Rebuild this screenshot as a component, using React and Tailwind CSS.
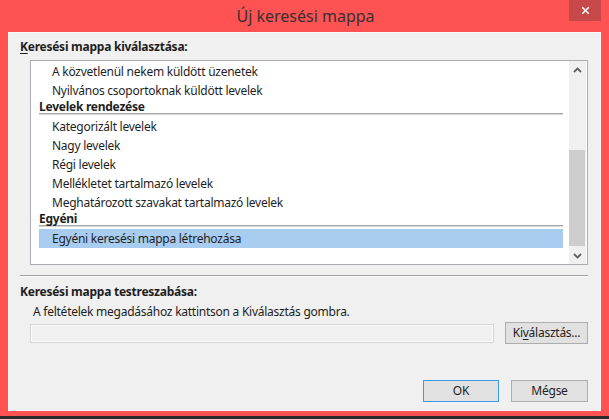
import { X } from 'lucide-react'

// Outlook "new search folder" dialog, Windows 8 style
const FONT = { fontFamily: '"Segoe UI", "Noto Sans", "Open Sans", sans-serif' }

function Item({ children, selected }) {
  return (
    <div
      className={`ml-[8px] mr-[6px] h-[19px] flex items-center pl-[13px] text-[12px] text-[#1e1e1e] ${
        selected ? 'bg-[#a9cdf1]' : ''
      }`}
    >
      {children}
    </div>
  )
}

function Header({ children }) {
  return (
    <div className="ml-[8px] mr-[6px]">
      <div className="h-[13px] flex items-center text-[12px] font-bold text-[#1e1e1e]">{children}</div>
      <div className="border-t border-t-[#a5a5a5] border-b border-b-[#d9d9d9]" />
      <div className="h-[2px]" />
    </div>
  )
}

function Chevron({ up }) {
  return (
    <svg width="9" height="6" viewBox="0 0 9 6" className="block">
      <path
        d={up ? 'M1 5 L4.5 1.5 L8 5' : 'M1 1 L4.5 4.5 L8 1'}
        fill="none"
        stroke="#606060"
        strokeWidth="1.8"
      />
    </svg>
  )
}

function Button({ children, primary, className = '' }) {
  return (
    <div
      className={`h-[22px] flex items-center justify-center text-[12px] text-[#1e1e1e] bg-[#e1e1e1] border ${
        primary ? 'border-[#3c9cf0]' : 'border-[#adadad]'
      } ${className}`}
    >
      {children}
    </div>
  )
}

export default function App() {
  return (
    <div className="w-[609px] h-[419px] bg-[#2b2b2b] select-none tracking-[-0.25px]" style={FONT}>
      <div className="w-[609px] h-[416px] bg-[#ff5252] flex flex-col">
        {/* title bar */}
        <div className="h-[32px] grid grid-cols-[1fr_auto_1fr] items-start">
          <div />
          <div className="h-[32px] flex items-center text-[16px] text-[#3a3030] pl-[2px] tracking-normal">
            Új keresési mappa
          </div>
          <div className="flex justify-end mr-[8px]">
            <div className="w-[32px] h-[21px] bg-[#c74848] flex items-center justify-center">
              <X size={11} strokeWidth={3.6} color="#ffffff" />
            </div>
          </div>
        </div>

        {/* content */}
        <div className="mx-[8px] h-[379px] bg-[#f0f0f0] border border-[#f7f7f7] flex flex-col pl-[11px] pr-[12px]">
          <div className="h-[16px] mt-[6px] flex items-center text-[12px] font-bold text-[#1e1e1e]">
            <span className="underline underline-offset-2">K</span>eresési mappa kiválasztása:
          </div>

          <div className="mt-[5px] ml-[10px] h-[205px] bg-white border border-[#abadb3] flex">
            <div className="flex-1 pt-[1px]">
              <Item>A közvetlenül nekem küldött üzenetek</Item>
              <Item>Nyilvános csoportoknak küldött levelek</Item>
              <Header>Levelek rendezése</Header>
              <Item>Kategorizált levelek</Item>
              <Item>Nagy levelek</Item>
              <Item>Régi levelek</Item>
              <Item>Mellékletet tartalmazó levelek</Item>
              <Item>Meghatározott szavakat tartalmazó levelek</Item>
              <Header>Egyéni</Header>
              <Item selected>Egyéni keresési mappa létrehozása</Item>
            </div>
            <div className="w-[17px] mr-[1px] bg-[#f0f0f0] flex flex-col">
              <div className="h-[17px] flex items-center justify-center">
                <Chevron up />
              </div>
              <div className="flex-1 flex flex-col pt-[72px] pb-[1px]">
                <div className="flex-1 bg-[#cdcdcd] mr-[1px]" />
              </div>
              <div className="h-[17px] flex items-center justify-center">
                <Chevron />
              </div>
            </div>
          </div>

          <div className="mt-[10px] border-t border-t-[#a0a0a0] border-b border-b-white" />

          <div className="h-[16px] mt-[7px] flex items-center text-[12px] font-bold text-[#1e1e1e]">
            Keresési mappa testreszabása:
          </div>
          <div className="h-[16px] mt-[4px] pl-[13px] flex items-center text-[12px] text-[#1e1e1e]">
            A feltételek megadásához kattintson a Kiválasztás gombra.
          </div>

          <div className="mt-[2px] flex items-center">
            <div className="ml-[10px] w-[464px] h-[19px] border border-[#d5d5d5] bg-[#f0f0f0] shadow-[inset_0_0_0_1px_#fafafa]" />
            <div className="flex-1" />
            <Button className="w-[83px]">
              Ki<span className="underline underline-offset-2">v</span>álasztás...
            </Button>
          </div>

          <div className="flex-1" />

          <div className="flex justify-end gap-[12px] mb-[8px]">
            <Button primary className="w-[76px]">OK</Button>
            <Button className="w-[77px]">Mégse</Button>
          </div>
        </div>
      </div>
    </div>
  )
}
